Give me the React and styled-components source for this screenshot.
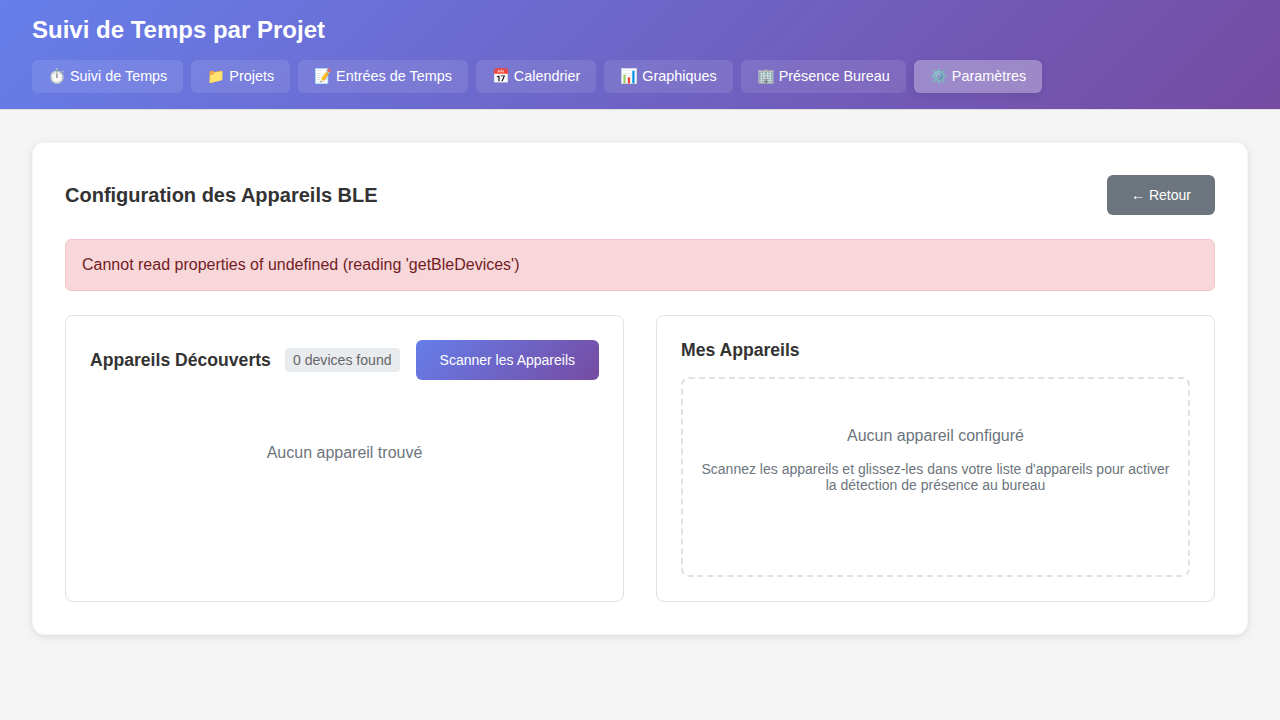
import React from "react";
import styled, { createGlobalStyle } from "styled-components";

const Global = createGlobalStyle`
  * { box-sizing: border-box; }
  html, body { margin: 0; padding: 0; }
  body {
    background: #f5f5f5;
    color: #333;
    font-family: "Liberation Sans", Arial, sans-serif;
    line-height: 1.6;
  }
`;

const gradient = "linear-gradient(135deg, #667eea 0%, #764ba2 100%)";

const Header = styled.header`
  background: ${gradient};
  color: #fff;
  padding: 16px 32px;
  border-bottom: 1px solid #e0e0e0;
`;
const Title = styled.h1`
  margin: 0 0 16px;
  font-size: 24px;
  font-weight: 700;
  line-height: 28px;
`;
const Nav = styled.nav`
  display: flex;
  gap: 8px;
`;
const NavButton = styled.button`
  height: 33px;
  padding: 8px 16px;
  border: 0;
  border-radius: 6px;
  color: #fff;
  font: 14.4px/17px "Liberation Sans", Arial, sans-serif;
  background: rgba(255, 255, 255, ${(p) => (p.$active ? 0.3 : 0.1)});
  box-shadow: ${(p) => (p.$active ? "0 2px 8px rgba(0, 0, 0, 0.1)" : "none")};
`;
const Main = styled.main`
  padding: 32px;
`;
const Card = styled.section`
  background: #fff;
  border: 1px solid #f5f5f5;
  border-radius: 12px;
  padding: 32px;
  box-shadow: 0 2px 8px rgba(0, 0, 0, 0.1);
`;
const TopRow = styled.div`
  display: flex;
  justify-content: space-between;
  align-items: center;
  margin-bottom: 24px;
`;
const PageTitle = styled.h2`
  margin: 0;
  font-size: 20px;
  font-weight: 700;
  color: #333;
`;
const BackButton = styled.button`
  height: 40px;
  padding: 0 24px;
  border: 0;
  border-radius: 6px;
  background: #6c757d;
  color: #fff;
  font: 14px "Liberation Sans", Arial, sans-serif;
`;
const Alert = styled.div`
  height: 52px;
  padding: 12px 16px;
  margin-bottom: 24px;
  background: #f8d7da;
  border: 1px solid #f5c6cb;
  border-radius: 6px;
  color: #721c24;
  font-size: 16px;
  line-height: 26px;
`;
const Columns = styled.div`
  display: grid;
  grid-template-columns: 1fr 1fr;
  gap: 32px;
`;
const Panel = styled.div`
  height: 287px;
  padding: 24px;
  border: 1px solid #dee2e6;
  border-radius: 8px;
`;
const PanelRow = styled.div`
  display: flex;
  align-items: center;
  justify-content: space-between;
`;
const PanelTitle = styled.h3`
  margin: 0;
  font-size: 17.6px;
  font-weight: 700;
  line-height: 21px;
  color: #333;
`;
const Badge = styled.span`
  margin-left: auto;
  padding: 0 8px;
  height: 24px;
  border-radius: 4px;
  background: #e9ecef;
  color: #666;
  font-size: 14.08px;
  line-height: 24px;
`;
const ScanButton = styled.button`
  height: 40px;
  margin-left: 16px;
  padding: 0 24px;
  border: 0;
  border-radius: 6px;
  background: ${gradient};
  color: #fff;
  font: 14px "Liberation Sans", Arial, sans-serif;
`;
const Empty = styled.p`
  margin: 60px 0 0;
  text-align: center;
  color: #6c757d;
  font-size: 16px;
  line-height: 26px;
`;
const PanelHeading = styled(PanelTitle)`
  margin-bottom: 16px;
`;
const DropZone = styled.div`
  height: 200px;
  padding: 48px 16px;
  border: 2px dashed #dee2e6;
  border-radius: 8px;
  text-align: center;
  color: #6c757d;
`;
const DropTitle = styled.p`
  margin: 0 0 17px;
  font-size: 16px;
  line-height: 16px;
  padding-top: 1px;
`;
const DropHint = styled.p`
  margin: 0;
  font-size: 14px;
  line-height: 16px;
`;

const tabs = [
  "⏱️ Suivi de Temps",
  "📁 Projets",
  "📝 Entrées de Temps",
  "📅 Calendrier",
  "📊 Graphiques",
  "🏢 Présence Bureau",
  "⚙️ Paramètres",
];

export default function App() {
  return (
    <>
      <Global />
      <Header>
        <Title>Suivi de Temps par Projet</Title>
        <Nav>
          {tabs.map((t, i) => (
            <NavButton key={t} $active={i === tabs.length - 1}>{t}</NavButton>
          ))}
        </Nav>
      </Header>
      <Main>
        <Card>
          <TopRow>
            <PageTitle>Configuration des Appareils BLE</PageTitle>
            <BackButton>← Retour</BackButton>
          </TopRow>
          <Alert>Cannot read properties of undefined (reading 'getBleDevices')</Alert>
          <Columns>
            <Panel>
              <PanelRow>
                <PanelTitle>Appareils Découverts</PanelTitle>
                <Badge>0 devices found</Badge>
                <ScanButton>Scanner les Appareils</ScanButton>
              </PanelRow>
              <Empty>Aucun appareil trouvé</Empty>
            </Panel>
            <Panel>
              <PanelHeading>Mes Appareils</PanelHeading>
              <DropZone>
                <DropTitle>Aucun appareil configuré</DropTitle>
                <DropHint>
                  Scannez les appareils et glissez-les dans votre liste d'appareils pour activer la détection de présence au bureau
                </DropHint>
              </DropZone>
            </Panel>
          </Columns>
        </Card>
      </Main>
    </>
  );
}
